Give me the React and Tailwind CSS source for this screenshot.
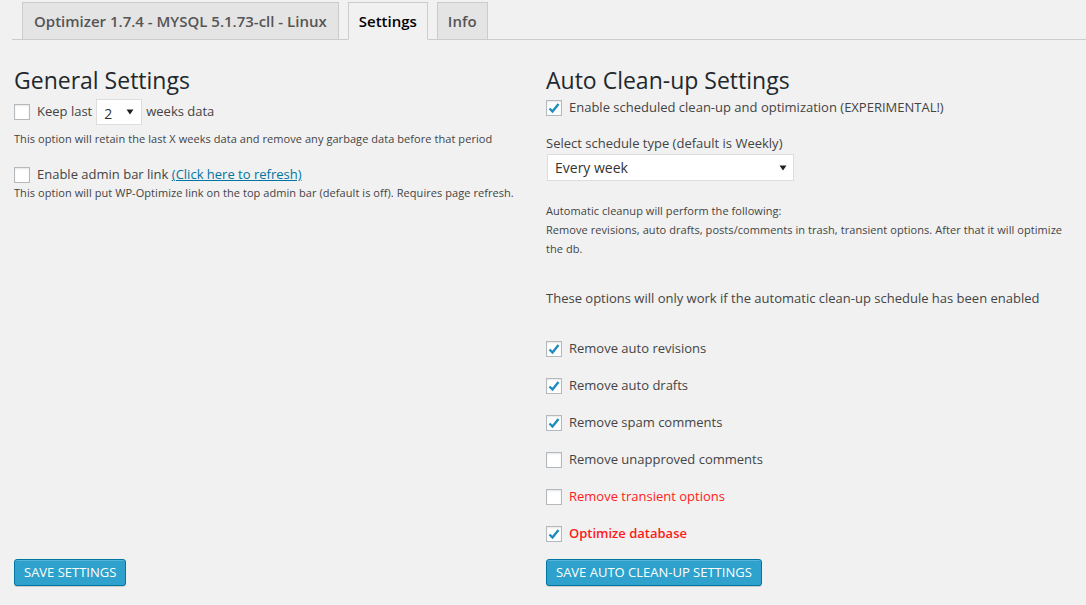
import React from 'react';

const Check = ({ checked }) => (
    <span className="w-4 h-4 shrink-0 border border-[#b4b9be] bg-white shadow-[inset_0_1px_2px_rgba(0,0,0,0.1)] flex items-center justify-center">
        {checked && (
            <svg width="14" height="14" viewBox="0 0 14 14">
                <path d="M2.5 7.5 L5.5 10.5 L11.5 3" fill="none" stroke="#1e8cbe" strokeWidth="2.4" />
            </svg>
        )}
    </span>
);

const Row = ({ checked, children, className = '' }) => (
    <label className={`flex items-center gap-[7px] text-[13px] ${className}`}>
        <Check checked={checked} />
        <span>{children}</span>
    </label>
);

const Arrow = () => (
    <svg width="8" height="6" viewBox="0 0 8 6">
        <path d="M0.5 0.5 L7.5 0.5 L4 5.5 Z" fill="#222" />
    </svg>
);

const App = () => {
    const options = [
        { label: 'Remove auto revisions', checked: true },
        { label: 'Remove auto drafts', checked: true },
        { label: 'Remove spam comments', checked: true },
        { label: 'Remove unapproved comments', checked: false },
        { label: 'Remove transient options', checked: false, cls: 'text-[#ff2020]' },
        { label: 'Optimize database', checked: true, cls: 'text-[#ff1a1a] font-semibold' },
    ];

    return (
        <div className="min-h-screen bg-[#f1f1f1] font-['Open_Sans',sans-serif] text-[#444]">
            {/* Tabs */}
            <div className="pt-[2px] ml-[12px] pl-[10px] border-b border-[#ccc] flex gap-[9px]">
                <div className="h-[38px] -mb-px px-[11px] border border-[#ccc] bg-[#e4e4e4] text-[15px] font-semibold text-[#555] flex items-center">
                    Optimizer 1.7.4 - MYSQL 5.1.73-cll - Linux
                </div>
                <div className="h-[38px] -mb-px px-[10px] border border-[#ccc] border-b-[#f1f1f1] bg-[#f1f1f1] text-[15px] font-semibold text-black flex items-center">
                    Settings
                </div>
                <div className="h-[38px] -mb-px px-[10px] border border-[#ccc] bg-[#e4e4e4] text-[15px] font-semibold text-[#555] flex items-center">
                    Info
                </div>
            </div>

            <div className="flex pl-[14px] pt-[25px]">
                {/* General Settings */}
                <div className="w-[532px] flex flex-col">
                    <h2 className="text-[23px] leading-[30px] text-[#23282d]">General Settings</h2>
                    <div className="flex items-center gap-[7px] text-[13px] mt-[4px] h-[26px]">
                        <Check checked={false} />
                        <span>Keep last</span>
                        <div className="ml-[-3px] w-[46px] h-[26px] bg-white border border-[#ddd] flex items-center justify-between pl-[7px] pr-[7px] text-[14px] text-[#333]">
                            <span className="pt-[3px]">2</span>
                            <Arrow />
                        </div>
                        <span className="ml-[-3px]">weeks data</span>
                    </div>
                    <p className="text-[11px] leading-[19px] mt-[4px] tracking-[0.06px]">
                        This option will retain the last X weeks data and remove any garbage data before that period
                    </p>
                    <Row checked={false} className="mt-[17px]">
                        Enable admin bar link{' '}
                        <a className="text-[#0074a2] underline">(Click here to refresh)</a>
                    </Row>
                    <p className="text-[11px] leading-[19px] mt-[-2px] tracking-[0.06px]">
                        This option will put WP-Optimize link on the top admin bar (default is off). Requires page refresh.
                    </p>
                    <div className="mt-auto">
                        <button className="h-[27px] px-[9px] bg-[#2ea2cc] border border-[#0074a2] rounded-[3px] text-white text-[13px] shadow-[inset_0_1px_0_rgba(120,200,230,0.5),0_1px_0_rgba(0,0,0,0.15)]">
                            SAVE SETTINGS
                        </button>
                    </div>
                </div>

                {/* Auto Clean-up Settings */}
                <div className="w-[530px] flex flex-col">
                    <h2 className="text-[23px] leading-[30px] text-[#23282d]">Auto Clean-up Settings</h2>
                    <Row checked className="mt-[3px]">Enable scheduled clean-up and optimization (EXPERIMENTAL!)</Row>
                    <p className="text-[13px] mt-[16px]">Select schedule type (default is Weekly)</p>
                    <div className="mt-[1px] ml-[1px] w-[247px] h-[27px] bg-white border border-[#ddd] flex items-center justify-between pl-[7px] pr-[6px] text-[14px] text-[#333]">
                        <span>Every week</span>
                        <Arrow />
                    </div>
                    <div className="text-[11px] leading-[19px] mt-[20px] pr-[10px] tracking-[0.06px]">
                        <p>Automatic cleanup will perform the following:</p>
                        <p>Remove revisions, auto drafts, posts/comments in trash, transient options. After that it will optimize the db.</p>
                    </div>
                    <p className="text-[13px] mt-[31px]">These options will only work if the automatic clean-up schedule has been enabled</p>
                    <div className="flex flex-col gap-[17px] mt-[30px]">
                        {options.map((o) => (
                            <Row key={o.label} checked={o.checked} className={`h-[20px] ${o.cls || ''}`}>
                                {o.label}
                            </Row>
                        ))}
                    </div>
                    <div className="mt-[15px]">
                        <button className="h-[27px] px-[9px] bg-[#2ea2cc] border border-[#0074a2] rounded-[3px] text-white text-[13px] shadow-[inset_0_1px_0_rgba(120,200,230,0.5),0_1px_0_rgba(0,0,0,0.15)]">
                            SAVE AUTO CLEAN-UP SETTINGS
                        </button>
                    </div>
                </div>
            </div>
        </div>
    );
};

export default App;
